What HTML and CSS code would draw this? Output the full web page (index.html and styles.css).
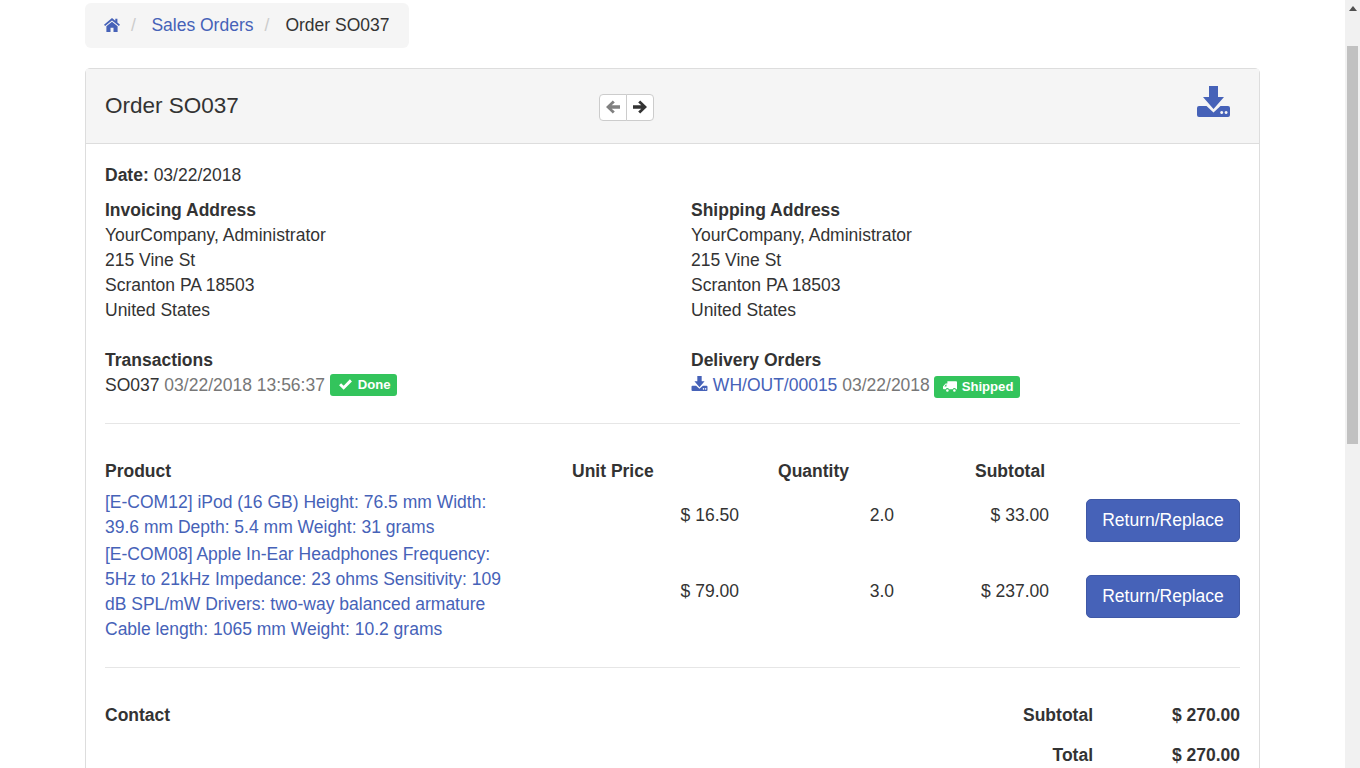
FILE: index.html
```html
<!DOCTYPE html>
<html lang="en">
<head>
<meta charset="utf-8">
<title>Order SO037</title>
<link rel="stylesheet" href="styles.css">
</head>
<body>
<div class="page">
  <main class="container">
    <nav class="crumbs">
      <a class="crumb-home" href="#"><svg class="home" viewBox="0 0 16 14"><path d="M8 0 0 6.800l1.100 1.300L8 2.400l6.900 5.700L16 6.800l-2.600-2.200V.8h-2.100v2zM2.400 8.300V14h4.100V9.800h3V14h4.100V8.300L8 3.700z"/></svg></a>
      <span class="sep">/</span>
      <a href="#">Sales Orders</a>
      <span class="sep">/</span>
      <span class="crumb-active">Order SO037</span>
    </nav>
    <section class="panel">
      <header class="panel-head">
        <h1 class="title">Order SO037</h1>
        <div class="pager">
          <span class="pager-btn muted"><svg viewBox="0 0 14 14"><path d="M6.800.4 0 7l6.800 6.600 2-2L5.700 8.800H14V5.200H5.700l3.100-2.800z"/></svg></span>
          <span class="pager-btn"><svg viewBox="0 0 14 14"><path d="M7.200.4 14 7l-6.800 6.600-2-2 3.100-2.800H0V5.200h8.300L5.200 2.400z"/></svg></span>
        </div>
        <a class="download" href="#"><svg viewBox="0 0 33 31"><path d="M12 0h9v11h6L16.500 23 6 11h6z"/><path fill-rule="evenodd" d="M2 20h7.500l7 6.500 7-6.500H31a2 2 0 0 1 2 2v7a2 2 0 0 1-2 2H2a2 2 0 0 1-2-2v-7a2 2 0 0 1 2-2zm24.200 6.500a1.500 1.500 0 1 0 0 .01zm4.400 0a1.500 1.500 0 1 0 0 .01z"/></svg></a>
      </header>
      <div class="panel-body">
        <p class="date"><strong>Date:</strong> 03/22/2018</p>
        <div class="two-col addresses">
          <div>
            <strong>Invoicing Address</strong>
            <div>YourCompany, Administrator</div>
            <div>215 Vine St</div>
            <div>Scranton PA 18503</div>
            <div>United States</div>
          </div>
          <div>
            <strong>Shipping Address</strong>
            <div>YourCompany, Administrator</div>
            <div>215 Vine St</div>
            <div>Scranton PA 18503</div>
            <div>United States</div>
          </div>
        </div>
        <div class="two-col status">
          <div>
            <strong>Transactions</strong>
            <div class="status-line">SO037 <span class="grey">03/22/2018 13:56:37</span> <span class="badge badge-done"><svg class="badge-icon" viewBox="0 0 14 12"><path d="M5 11.800 0 6.800l2.200-2.200L5 7.400 11.800.4 14 2.600z"/></svg>Done</span></div>
          </div>
          <div>
            <strong>Delivery Orders</strong>
            <div class="status-line"><a href="#"><svg class="inline-dl" viewBox="0 0 33 31"><path d="M12 0h9v11h6L16.500 23 6 11h6z"/><path fill-rule="evenodd" d="M2 20h7.500l7 6.500 7-6.500H31a2 2 0 0 1 2 2v7a2 2 0 0 1-2 2H2a2 2 0 0 1-2-2v-7a2 2 0 0 1 2-2zm24.200 6.500a1.500 1.500 0 1 0 0 .01zm4.400 0a1.500 1.500 0 1 0 0 .01z"/></svg> WH/OUT/00015</a> <span class="grey">03/22/2018</span> <span class="badge badge-ship"><svg class="badge-icon truck" viewBox="0 0 16 12"><path fill-rule="evenodd" d="M5 0h10a1 1 0 0 1 1 1v8h-1.100a2 2 0 0 0-3.800 0H6.900a2 2 0 0 0-3.800 0H1a1 1 0 0 1-1-1V6l3-3.500h2zM1.600 6H4V3.800H3.300zM5 12a1.500 1.500 0 1 1 0-3 1.500 1.500 0 0 1 0 3zm8 0a1.500 1.500 0 1 1 0-3 1.500 1.500 0 0 1 0 3z"/></svg>Shipped</span></div>
          </div>
        </div>
        <hr class="rule rule-top">
        <div class="lines">
          <div class="line line-head">
            <strong class="c-prod">Product</strong>
            <strong class="c-price head-price">Unit Price</strong>
            <strong class="c-qty head-qty">Quantity</strong>
            <strong class="c-sub head-sub">Subtotal</strong>
            <span class="c-act"></span>
          </div>
          <div class="line">
            <a class="c-prod" href="#">[E-COM12] iPod (16 GB) Height: 76.5 mm Width: 39.6 mm Depth: 5.4 mm Weight: 31 grams</a>
            <span class="c-price">$ 16.50</span>
            <span class="c-qty">2.0</span>
            <span class="c-sub">$ 33.00</span>
            <span class="c-act"><a class="btn" href="#">Return/Replace</a></span>
          </div>
          <div class="line line-tall">
            <a class="c-prod" href="#">[E-COM08] Apple In-Ear Headphones Frequency: 5Hz to 21kHz Impedance: 23 ohms Sensitivity: 109 dB SPL/mW Drivers: two-way balanced armature Cable length: 1065 mm Weight: 10.2 grams</a>
            <span class="c-price">$ 79.00</span>
            <span class="c-qty">3.0</span>
            <span class="c-sub">$ 237.00</span>
            <span class="c-act"><a class="btn" href="#">Return/Replace</a></span>
          </div>
        </div>
        <hr class="rule rule-bottom">
        <div class="summary">
          <strong>Contact</strong>
          <div class="totals">
            <div class="total-row"><strong>Subtotal</strong><strong class="amount">$ 270.00</strong></div>
            <div class="total-row"><strong>Total</strong><strong class="amount">$ 270.00</strong></div>
          </div>
        </div>
      </div>
    </section>
  </main>
  <div class="scrollbar"><span class="scroll-arrow"></span><div class="thumb"></div></div>
</div>
</body>
</html>
```
FILE: styles.css
```css
* { box-sizing: border-box; }
html, body { margin: 0; height: 768px; overflow: hidden; }
body {
  font-family: "Liberation Sans", Arial, sans-serif;
  font-size: 17.5px;
  line-height: 25px;
  color: #333;
  background: #fff;
}
a { color: #4662b8; text-decoration: none; }
strong { font-weight: 700; }
.page { display: flex; height: 768px; overflow: hidden; }
.container { width: 1345px; flex: none; padding: 3px 85px 0; height: 768px; overflow: hidden; }
.scrollbar { flex: none; width: 15px; height: 768px; background: #f1f1f1; padding: 6px 2px 0; }
.scroll-arrow {
  display: block; width: 0; height: 0; margin: 0 auto 35px;
  border: 4px solid transparent; border-top: 0;
  border-bottom: 5px solid #505050;
}
.thumb { width: 11px; height: 398px; background: #c1c1c1; }

.crumbs {
  display: flex; align-items: center;
  width: 324px; height: 45px;
  padding: 0 19px;
  background: #f5f5f5;
  border-radius: 6px;
  margin-bottom: 20px;
  white-space: nowrap;
}
.crumb-home { display: flex; margin-top: -2px; }
.home { width: 16px; height: 14px; fill: #4662b8; }
.sep { color: #ccc; margin: 0 15.500px 0 11px; }
.crumb-active { color: #333; margin-left: .5px; }

.panel { border: 1px solid #ddd; border-radius: 5px; width: 1175px; }
.panel-head {
  display: flex; align-items: center;
  height: 75px;
  padding: 0 19px;
  background: #f5f5f5;
  border-bottom: 1px solid #ddd;
}
.title { margin: -1px 0 0; font-size: 22.5px; font-weight: 400; line-height: 27px; width: 494px; }
.pager { display: flex; margin-top: 2px; }
.pager-btn {
  display: flex; align-items: center; justify-content: center;
  width: 28px; height: 27px;
  background: #fff;
  border: 1px solid #ccc;
  border-radius: 4px 0 0 4px;
}
.pager-btn + .pager-btn { margin-left: -1px; border-radius: 0 4px 4px 0; }
.pager-btn svg { width: 14px; height: 14px; fill: #333; }
.pager-btn.muted svg { fill: #808080; }
.download { margin-left: auto; margin-right: 10px; display: flex; margin-top: -9px; }
.download svg { width: 33px; height: 31px; fill: #4662b8; }

.panel-body { padding: 19px 19px 0; }
.date { margin: 0 0 10px; }
.two-col { display: grid; grid-template-columns: 586px 1fr; }
.status { margin-top: 25px; }
.status-line { height: 25px; white-space: nowrap; }
.grey { color: #777; }
.badge {
  display: inline-flex; align-items: center;
  height: 22px; padding: 0 6px 0 9px;
  border-radius: 3px;
  background: #33c45c; color: #fff;
  font-size: 13.125px; font-weight: 700; line-height: 22px;
  vertical-align: 1px;
}
.badge-ship { vertical-align: -1px; margin-left: -1px; padding-right: 7px; }
.badge-icon { width: 13px; height: 11px; fill: #fff; margin-right: 6px; }
.truck { width: 14px; margin-right: 5px; }
.inline-dl { width: 17px; height: 15px; fill: #4662b8; vertical-align: 0; }
.rule { border: 0; border-top: 1px solid #e6e6e6; margin: 0; }
.rule-top { margin-top: 25px; }
.rule-bottom { margin-top: 23px; }

.lines { margin-top: 35px; }
.line { display: grid; grid-template-columns: 408px 226px 155px 155px 1fr; align-items: center; padding-bottom: 2px; }
.line-head { height: 25px; padding-bottom: 0; margin-bottom: 6px; }
.line .c-prod { width: 400px; }
.c-price, .c-qty, .c-sub { text-align: right; }
.line-tall .c-price, .line-tall .c-qty, .line-tall .c-sub { margin-top: -1px; }
.head-price { text-align: left; padding-left: 59px; }
.head-qty { padding-right: 45px; }
.head-sub { padding-right: 4px; }
.c-act { display: flex; justify-content: flex-end; }
.btn {
  display: block;
  width: 154px; height: 43px;
  margin: 5px 0 -5px;
  line-height: 41px; text-align: center;
  color: #fff; background: #4662b8;
  border: 1px solid #3f58a6; border-radius: 5px;
}
.line-tall .btn { margin: 4px 0 -4px; }
.summary { display: flex; justify-content: space-between; margin-top: 35px; }
.totals { width: 300px; }
.total-row { display: flex; justify-content: flex-end; height: 40px; }
.amount { width: 147px; text-align: right; }
```
